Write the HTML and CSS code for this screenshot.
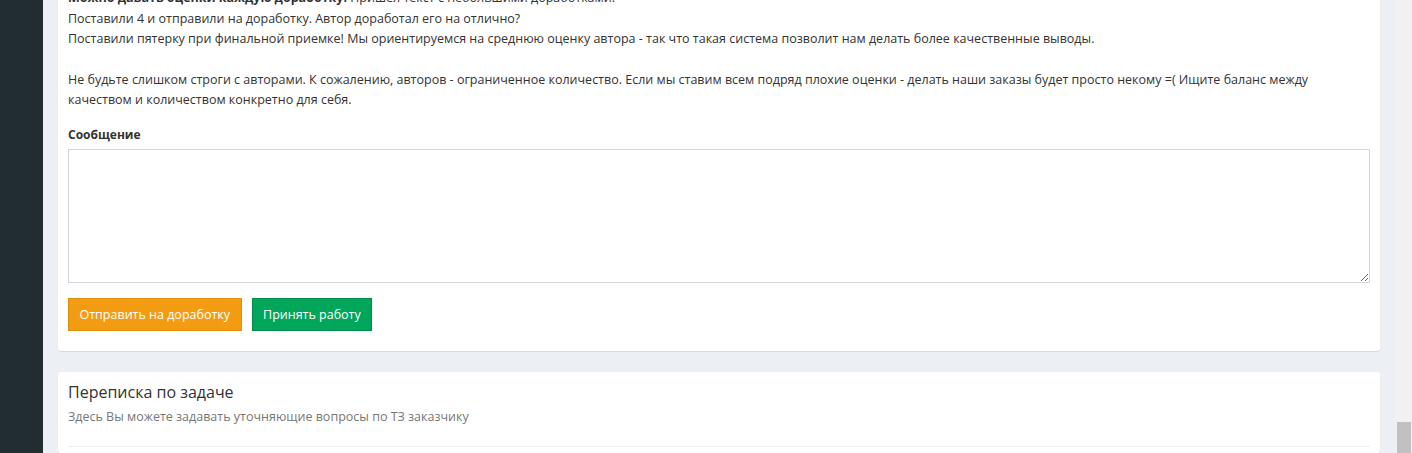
FILE: index.html
```html
<!DOCTYPE html>
<html lang="ru">
<head>
<meta charset="utf-8">
<link rel="stylesheet" href="styles.css">
</head>
<body>
<div class="layout">
  <aside class="sidebar"></aside>
  <main class="content">
    <section class="box box-review">
      <div class="info">
        <p><b>Можно давать оценки каждую доработку.</b> Пришел текст с небольшими доработками!<br>
        Поставили 4 и отправили на доработку. Автор доработал его на отлично?<br>
        Поставили пятерку при финальной приемке! Мы ориентируемся на среднюю оценку автора - так что такая система позволит нам делать более качественные выводы.</p>
        <p>Не будьте слишком строги с авторами. К сожалению, авторов - ограниченное количество. Если мы ставим всем подряд плохие оценки - делать наши заказы будет просто некому =( Ищите баланс между качеством и количеством конкретно для себя.</p>
      </div>
      <label class="field-label" for="msg">Сообщение</label>
      <textarea id="msg" class="field"></textarea>
      <div class="actions">
        <button class="btn btn-warning">Отправить на доработку</button>
        <button class="btn btn-success">Принять работу</button>
      </div>
    </section>
    <section class="box box-chat">
      <h3 class="box-title">Переписка по задаче</h3>
      <p class="box-sub">Здесь Вы можете задавать уточняющие вопросы по ТЗ заказчику</p>
      <div class="divider"></div>
    </section>
  </main>
  <div class="scrollbar"><div class="thumb"></div></div>
</div>
</body>
</html>
```
FILE: styles.css
```css
* { box-sizing: border-box; }
html, body { margin: 0; padding: 0; height: 100%; overflow: hidden; }
body {
  font-family: "Open Sans", "Noto Sans", sans-serif;
  font-size: 12.5px;
  color: #333;
  background: #ecf0f5;
}
.layout {
  display: flex;
  height: 453px;
}
.sidebar {
  width: 43px;
  flex: none;
  background: #222d32;
}
.content {
  flex: 1;
  padding: 0 15px;
  display: flex;
  flex-direction: column;
  gap: 21px;
}
.scrollbar {
  width: 17px;
  flex: none;
  background: #f1f1f1;
  display: flex;
  flex-direction: column;
  justify-content: flex-end;
  padding: 0 1px 0 2px;
}
.thumb {
  height: 31px;
  background: #c1c1c1;
}
.box {
  background: #fff;
  border-radius: 3px;
  box-shadow: 0 1px 1px rgba(0,0,0,0.1);
  padding: 0 10px;
}
.box-review {
  margin-top: -12px;
  padding-bottom: 20px;
}
.info p {
  margin: 0 0 20px;
  line-height: 20.5px;
}
.info p:last-child { margin-bottom: 0; }
.field-label {
  display: block;
  font-weight: 700;
  font-size: 12px;
  margin-top: 14px;
  line-height: 20px;
  margin-bottom: 4px;
}
.field {
  display: block;
  width: 100%;
  height: 134px;
  border: 1px solid #d2d6de;
  resize: vertical;
  font: inherit;
}
.actions {
  display: flex;
  gap: 10px;
  margin-top: 15px;
}
.btn {
  font-family: inherit;
  font-size: 12.5px;
  color: #fff;
  height: 33px;
  padding: 0 10.5px;
  border: 1px solid transparent;
  border-radius: 0;
}
.btn-warning { background: #f39c12; border-color: #e08e0b; }
.btn-success { background: #00a65a; border-color: #008d4c; }
.box-chat {
  flex: 1;
  padding-top: 9px;
}
.box-title {
  margin: 0;
  font-size: 16px;
  font-weight: 400;
  line-height: 23px;
}
.box-sub {
  margin: 4px 0 0;
  font-size: 12.5px;
  color: #777;
  line-height: 18px;
}
.divider {
  margin-top: 20px;
  border-top: 1px solid #eee;
}
```
